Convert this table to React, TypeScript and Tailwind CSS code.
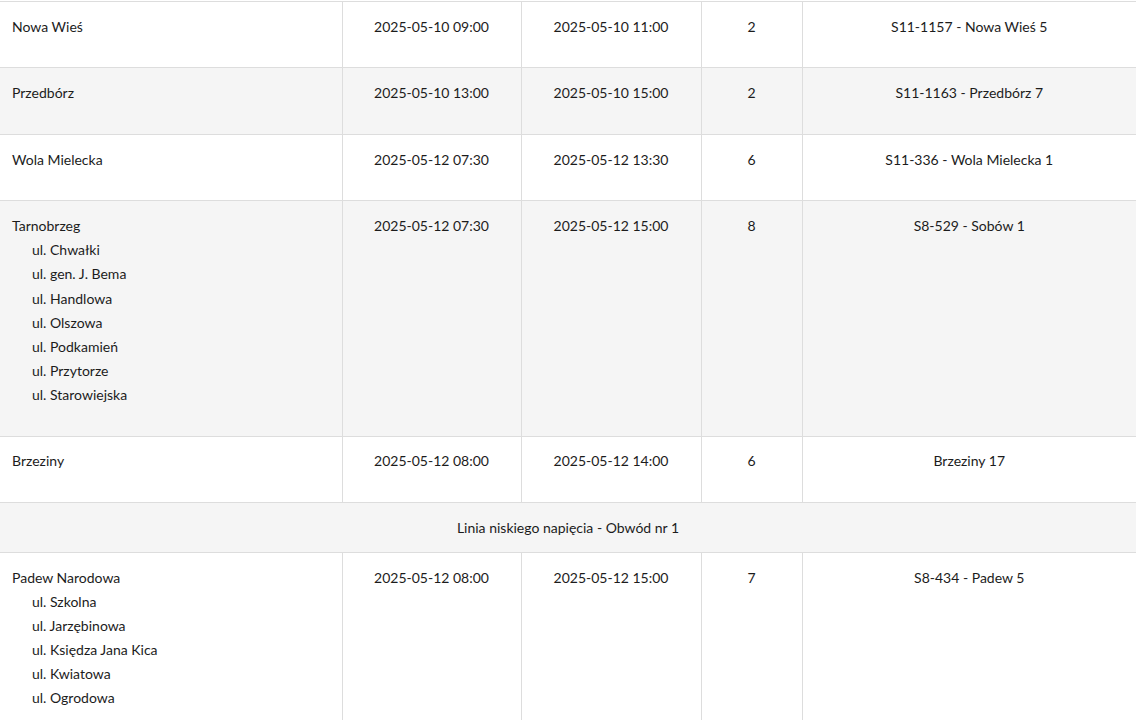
const ROWS = [
  { place: 'Nowa Wieś', streets: [], from: '2025-05-10 09:00', to: '2025-05-10 11:00', hours: '2', station: 'S11-1157 - Nowa Wieś 5' },
  { place: 'Przedbórz', streets: [], from: '2025-05-10 13:00', to: '2025-05-10 15:00', hours: '2', station: 'S11-1163 - Przedbórz 7' },
  { place: 'Wola Mielecka', streets: [], from: '2025-05-12 07:30', to: '2025-05-12 13:30', hours: '6', station: 'S11-336 - Wola Mielecka 1' },
  {
    place: 'Tarnobrzeg',
    streets: ['ul. Chwałki', 'ul. gen. J. Bema', 'ul. Handlowa', 'ul. Olszowa', 'ul. Podkamień', 'ul. Przytorze', 'ul. Starowiejska'],
    from: '2025-05-12 07:30',
    to: '2025-05-12 15:00',
    hours: '8',
    station: 'S8-529 - Sobów 1',
  },
  { place: 'Brzeziny', streets: [], from: '2025-05-12 08:00', to: '2025-05-12 14:00', hours: '6', station: 'Brzeziny 17' },
]

const AFTER = [
  {
    place: 'Padew Narodowa',
    streets: ['ul. Szkolna', 'ul. Jarzębinowa', 'ul. Księdza Jana Kica', 'ul. Kwiatowa', 'ul. Ogrodowa'],
    from: '2025-05-12 08:00',
    to: '2025-05-12 15:00',
    hours: '7',
    station: 'S8-434 - Padew 5',
  },
]

type Row = (typeof ROWS)[number]

function OutageRow({ row, shaded }: { row: Row; shaded: boolean }) {
  const cell = 'align-top border border-[#dddddd] pt-[12.8px] pb-[28.6px] leading-[24.1px]'
  return (
    <tr className={shaded ? 'bg-[#f5f5f5]' : 'bg-white'}>
      <td className={`${cell} border-l-0 pl-3 text-left`}>
        <div>{row.place}</div>
        {row.streets.map((s) => (
          <div key={s} className="pl-5">
            {s}
          </div>
        ))}
      </td>
      <td className={`${cell} text-center`}>{row.from}</td>
      <td className={`${cell} text-center`}>{row.to}</td>
      <td className={`${cell} text-center`}>{row.hours}</td>
      <td className={`${cell} border-r-0 text-center`}>{row.station}</td>
    </tr>
  )
}

export default function App() {
  return (
    <div className="w-[1136px] h-[720px] overflow-hidden bg-white text-[14px] text-[#1c1c1c] font-['Lato','Open_Sans',sans-serif]">
      <div className="h-[1px] bg-white" />
      <table className="w-[1136px] border-collapse table-fixed">
        <colgroup>
          <col className="w-[342px]" />
          <col className="w-[179px]" />
          <col className="w-[180px]" />
          <col className="w-[101px]" />
          <col className="w-[334px]" />
        </colgroup>
        <tbody>
          {ROWS.map((r, i) => (
            <OutageRow key={r.place} row={r} shaded={i % 2 === 1} />
          ))}
          <tr className="bg-[#f5f5f5]">
            <td colSpan={5} className="border border-x-0 border-[#dddddd] pt-[12.5px] pb-[12.5px] leading-6 text-center">
              Linia niskiego napięcia - Obwód nr 1
            </td>
          </tr>
          {AFTER.map((r) => (
            <OutageRow key={r.place} row={r} shaded={false} />
          ))}
        </tbody>
      </table>
    </div>
  )
}
